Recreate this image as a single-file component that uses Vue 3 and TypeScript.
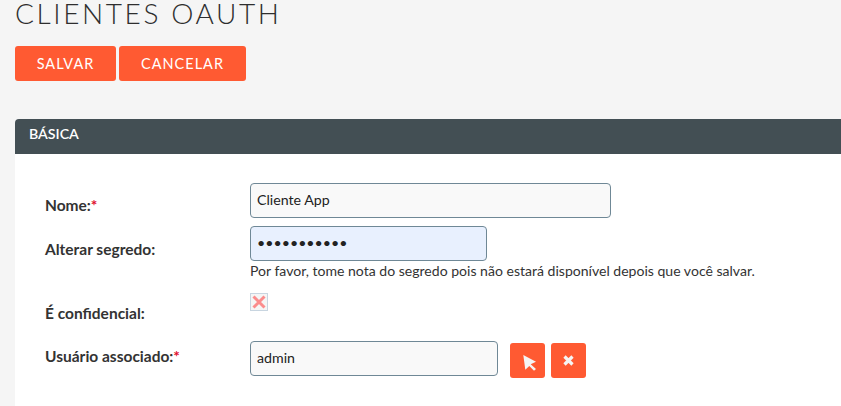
<script setup lang="ts">
const title = 'CLIENTES OAUTH'
</script>

<template>
  <div class="page">
    <h1>{{ title }}</h1>
    <div class="actions">
      <button class="btn save">SALVAR</button>
      <button class="btn cancel">CANCELAR</button>
    </div>
    <section class="panel">
      <div class="panel-head">BÁSICA</div>
      <div class="panel-body">
        <div class="row row-name">
          <label>Nome:<span class="req">*</span></label>
          <input class="field wide" value="Cliente App" />
        </div>
        <div class="row row-secret">
          <label>Alterar segredo:</label>
          <div>
            <input class="field secret" type="password" value="abcdefghijk" />
            <p class="hint">Por favor, tome nota do segredo pois não estará disponível depois que você salvar.</p>
          </div>
        </div>
        <div class="row row-conf">
          <label>É confidencial:</label>
          <span class="check">
            <svg width="16" height="16" viewBox="0 0 16 16"><path d="M2.500 2.500l11 11M13.500 2.500l-11 11" stroke="#fb8c8c" stroke-width="3" /></svg>
          </span>
        </div>
        <div class="row row-user">
          <label>Usuário associado:<span class="req">*</span></label>
          <input class="field user" value="admin" />
          <button class="icon-btn first">
            <svg width="35" height="35" viewBox="0 0 35 35"><path d="M13.300 12L26 18.700l-5.300 2.600L26 26l-2 1.700-4.700-4.700-4 3.700z" fill="#f5f5f5" /></svg>
          </button>
          <button class="icon-btn">
            <svg width="35" height="35" viewBox="0 0 35 35"><path d="M13.500 13.500l8 8M21.500 13.500l-8 8" stroke="#f5f5f5" stroke-width="3.200" /></svg>
          </button>
        </div>
      </div>
    </section>
  </div>
</template>

<style scoped>
.page {
  height: 406px;
  overflow: hidden;
  background: #f5f5f5;
  padding-left: 15px;
  box-sizing: border-box;
  font-family: Lato, "Liberation Sans", sans-serif;
  color: #000;
}
h1 {
  margin: 0;
  height: 31px;
  font-size: 28px;
  line-height: 26px;
  font-weight: 300;
  letter-spacing: 2.6px;
  color: #2e2e2e;
  white-space: nowrap;
}
.actions {
  display: flex;
  gap: 3px;
  margin-top: 15px;
}
.btn {
  height: 35px;
  padding: 0;
  border: 0;
  border-radius: 3px;
  background: #ff5a32;
  color: #fff;
  font: 400 14.5px Lato, sans-serif;
  letter-spacing: 1px;
}
.save {
  width: 101px;
}
.cancel {
  width: 127px;
}
.panel {
  margin-top: 38px;
  background: #fff;
  border-radius: 4px 0 0 0;
  height: 300px;
}
.panel-head {
  height: 35px;
  line-height: 29px;
  padding-left: 14px;
  background: #434f54;
  color: #fff;
  font-size: 14.2px;
  font-weight: 600;
  border-radius: 4px 0 0 0;
}
.panel-body {
  padding-left: 30px;
}
.row {
  display: flex;
  align-items: flex-start;
}
label {
  width: 205px;
  flex: none;
  font-size: 15.5px;
  font-weight: 700;
  color: #333;
}
.req {
  color: #e0102f;
}
.field {
  box-sizing: border-box;
  height: 35px;
  border: 1px solid #6f8896;
  border-radius: 4px;
  background: #f9f9f9;
  padding: 0 6px 2px;
  font: 14.2px Lato, sans-serif;
  color: #222;
}
.wide {
  width: 361px;
}
.secret {
  width: 237px;
  background: #e8f0fe;
  display: block;
}
.user {
  width: 248px;
}
.hint {
  margin: 1px 0 0;
  font-size: 14.05px;
  line-height: 18px;
  color: #333;
}
.row-name {
  padding-top: 29px;
}
.row-name label {
  padding-top: 13px;
}
.row-secret {
  margin-top: 8px;
}
.row-secret label {
  padding-top: 14px;
}
.row-conf {
  margin-top: 13px;
}
.row-conf label {
  padding-top: 11px;
}
.check {
  box-sizing: border-box;
  width: 18px;
  height: 18px;
  border: 1px solid #c8d5e0;
  display: flex;
  align-items: center;
  justify-content: center;
  background: #f5f5f5;
}
.row-user {
  margin-top: 19px;
}
.row-user label {
  padding-top: 6px;
}
.icon-btn {
  width: 35px;
  height: 35px;
  border: 0;
  border-radius: 3px;
  background: #ff5a32;
  margin: 2px 0 0 6px;
  padding: 0;
  display: block;
}
.first {
  margin-left: 12px;
}
</style>
